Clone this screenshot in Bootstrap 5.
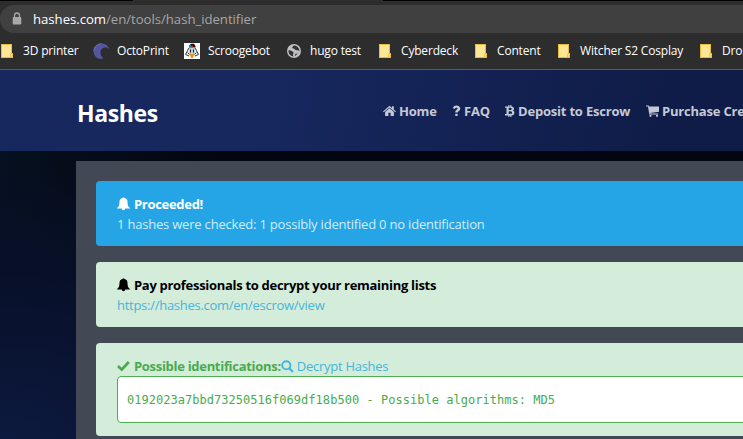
<!DOCTYPE html>
<html lang="en">
<head>
<meta charset="utf-8">
<title>Hashes - Hash identifier</title>
<link href="https://cdn.jsdelivr.net/npm/bootstrap@5.3.0/dist/css/bootstrap.min.css" rel="stylesheet">
<style>
body{width:743px;height:439px;font-family:"Open Sans","Noto Sans",sans-serif;font-size:13px;line-height:20px;letter-spacing:-.2px;background:#2d2d2d}
svg{display:block;flex:none}
.tabs-edge{height:1px;background:linear-gradient(90deg,#000 133px,#2d2d2d 133px,#2d2d2d 383px,#000 383px)}
.address{height:28px;margin-top:4px;padding-left:12px;border-radius:14px 0 0 14px;background:#404040;color:#a6a6a6;font-size:13.2px;letter-spacing:-.04px}
.address svg{margin-right:11px}
.address b{font-weight:400;color:#fff}
.bookmarks{height:37px;padding-left:1px;border-bottom:1px solid #5b5b5b;color:#fff;font-size:12px;letter-spacing:-.18px}
.bookmark{display:flex;align-items:center;flex:none;white-space:nowrap}
.bookmark svg{margin-right:10px}
.bookmark .fav{margin-right:7px}
.bookmark .fav-duck{margin-right:8px}
.bookmark .fav-globe{margin-right:9px}
.w-a{width:92px}.w-b{width:91px}.w-c{width:103px}.w-d{width:92px}.w-e{width:96px}.w-f{width:83px}.w-g{width:142px}
.site-header{height:81px;padding-left:77px;background:linear-gradient(100deg,#17285f 35%,#0f1c47 90%)}
.brand{width:306px;flex:none;padding-top:4px;font-size:23px;font-weight:700;color:#fff;letter-spacing:-.4px}
.menu{padding-top:1px;color:#c5c9d6;font-weight:700;font-size:13px;letter-spacing:-.2px;white-space:nowrap}
.menu svg{margin-right:3px}
.menu>div{display:flex;align-items:center;flex:none}
.m-a{width:69px}.m-b{width:53px}.m-c{width:141px}
.stage{height:288px;padding:10px 0 0 76px;background:radial-gradient(ellipse 420px 300px at 0 110%,#0d1b42 0,#081029 65%,transparent 100%),linear-gradient(90deg,#061020,#030610 30%)}
.sheet{height:278px;padding:20px 0 0 20px;background:#434954}
.notice{margin:0 -32px 16px 0;padding:13px 21px 0;height:65px;border:0;border-radius:4px}
.notice-blue{background:#25a5e5;color:#d0edfa}
.notice-green{background:#d4ecda;color:#000}
.notice-tall{height:93px}
.notice svg{margin-right:4px}
.notice a{color:#46b5d9;text-decoration:none}
.notice a svg{margin-right:3px}
.link-line{letter-spacing:-.27px}
.title{font-weight:700;letter-spacing:-.3px}
.green{color:#48ab4e}
.result{height:47px;padding-left:9px;background:#fff;border:1px solid #4caf50;border-radius:4px;color:#48ab4e;font:12px "DejaVu Sans Mono",monospace;letter-spacing:.03px}
</style>
</head>
<body class="overflow-hidden">
<svg width="0" height="0" class="position-absolute">
<defs>
<symbol id="folder" viewBox="0 0 12 14"><path fill="#e8bd3d" d="M0 0h11v9h1v5H0z"/><path fill="#ffe694" d="M1 1h9v8.500l-.8.500v3H1z"/><path fill="#ffe07b" d="M10 10h1v3h-1z"/></symbol>
<symbol id="bell" viewBox="0 0 13 14"><path fill="currentColor" d="M5.700 1V.4h1.600V1c2.300.3 3.200 2 3.200 4 0 3.600.9 4.800 2.400 5.900v.7H8.200c0 .9-.7 1.600-1.700 1.600s-1.700-.7-1.700-1.600H.1v-.7C1.600 9.800 2.500 8.600 2.500 5c0-2 .9-3.700 3.200-4z"/></symbol>
</defs></svg>
<div class="tabs-edge"></div>
<div class="address d-flex align-items-center">
<svg width="10" height="14" viewBox="0 0 10 14"><path d="M2.500 6V3.500a2.500 2.500 0 0 1 5 0V6" fill="none" stroke="#a8a8a8" stroke-width="1.300"/><rect x=".7" y="5" width="8.600" height="7.500" rx="1" fill="#a8a8a8"/></svg>
<span><b>hashes.com</b>/en/tools/hash_identifier</span>
</div>
<div class="bookmarks d-flex">
<div class="bookmark w-a"><svg width="12" height="14"><use href="#folder"/></svg><span>3D printer</span></div>
<div class="bookmark w-b"><svg class="fav" width="17" height="16" viewBox="0 0 17 16"><path d="M8 15.800C3.500 15.800.6 12.300.6 8.200.6 3.500 4 .4 8.500.4c4 0 7 2.300 7.700 5.700-1.500-1.700-3.300-2-4.900-1.500C8.600 5.400 7.200 7.500 7.500 10c.2 2.200 1.200 3.900 2.900 5.200-.6.400-1.500.6-2.400.6z" fill="#5556a0"/><path d="M1 8c0-4 3-7.200 7.500-7.200" fill="none" stroke="#6b6cb5"/></svg><span>OctoPrint</span></div>
<div class="bookmark w-c"><svg class="fav-duck" width="16" height="16" viewBox="0 0 16 16"><path fill="#fff" d="M0 0h16v16H0z"/><path fill="#171717" d="M5 3 7 .8h3l1.500 2.200v1.500H5z"/><path fill="#1687c9" d="M5 2h2v2H5z"/><path fill="#d53b35" d="M7 3h2v1.500H7z"/><path fill="#bcd3dc" d="M5.500 5h5l1 6-3.500 3-3.500-3z"/><path fill="none" stroke="#333" d="M5 5 1.500 11.500 5 13M11 5l3.500 6.500L11 13M3.500 9.500l2 2M12.500 9.500l-2 2"/><path fill="#222" d="M6 6.500h1v3H6zM9 6.500h1v3H9z"/><path fill="#ec9426" d="M5.500 11h5l-1 3L8 15.500 6.500 14z"/></svg><span>Scroogebot</span></div>
<div class="bookmark w-d"><svg class="fav-globe" width="14" height="14" viewBox="0 0 14 14"><circle cx="7" cy="7" r="7" fill="#bfc1c5"/><path d="M1.500 6.300c2-.5 3 .8 4.300 1.500 1 .6 1.300 1.400.4 2-.7.500-.4 1.500.4 2.600C3.500 12.300 1.200 9.700 1.500 6.300zM7.500 1.600c-1.600.3-2.600 1.300-2.100 2.400.4.800 1.500.5 2.300 1.300.7.900 1.600 1.200 3 1 .7 0 1.300.6 1.700 1.500.3-3-1.500-5.700-4.900-6.200zM8 10.700c.5-1 1.700-1 2.700-1.400-.6 1.200-1.600 2.200-2.900 2.600z" fill="#333"/></svg><span>hugo test</span></div>
<div class="bookmark w-e"><svg width="12" height="14"><use href="#folder"/></svg><span>Cyberdeck</span></div>
<div class="bookmark w-f"><svg width="12" height="14"><use href="#folder"/></svg><span>Content</span></div>
<div class="bookmark w-g"><svg width="12" height="14"><use href="#folder"/></svg><span>Witcher S2 Cosplay</span></div>
<div class="bookmark"><svg width="12" height="14"><use href="#folder"/></svg><span>Drones</span></div>
</div>
<header class="site-header d-flex align-items-center">
<div class="brand">Hashes</div>
<nav class="menu d-flex">
<div class="m-a"><svg width="13" height="12" viewBox="0 0 13 12"><path fill="currentColor" d="M6.500.8 9 3V1.300h1.800v3.300L13 6.500l-.7.800L6.500 2.400.7 7.300 0 6.500zM6.500 3.300l4.400 3.800v3.900H7.600V7.800H5.400V11H2.100V7.100z"/></svg><span>Home</span></div>
<div class="m-b"><svg width="9" height="12" viewBox="0 0 9 12"><path fill="currentColor" d="M.8 3C1.500 1.300 2.700.5 4.500.5 6.700.5 8.300 2 8.300 3.600c0 1.400-.8 2-1.600 2.600-.8.500-1 .8-1 1.300H3.300c0-1.500.4-2 1.300-2.700.7-.5 1-.8 1-1.200 0-.5-.4-.9-1.200-.9-.7 0-1.200.4-1.700 1.300zM3.300 8.700h2.300V11H3.300z"/></svg><span>FAQ</span></div>
<div class="m-c"><svg width="10" height="12" viewBox="0 0 10 12"><path fill="currentColor" fill-rule="evenodd" d="M0 1.400h3.300V0h1.100v1.400h.9V0h1.100v1.500C8.200 1.700 9 2.500 9 3.700c0 .9-.4 1.500-1.300 1.900 1.200.3 1.700 1.100 1.700 2.100 0 1.700-1.100 2.500-3 2.700V12H5.300v-1.600h-.9V12H3.300v-1.600H0V9h1.500V2.800H0zM3.700 2.800v2.100c1.900.1 3 0 3-1 0-1.100-1.100-1.200-3-1.100zm0 3.400V9c2.100.1 3.400 0 3.400-1.400S5.800 6.200 3.700 6.200z"/></svg><span>Deposit to Escrow</span></div>
<div><svg width="13" height="12" viewBox="0 0 13 12"><path fill="currentColor" d="M0 .5h2.700l.3 1h10v5.300L4.200 7.900l.2.700h7.700v1H3.300L2 1.500H0z"/><circle cx="4.500" cy="10.800" r="1.100" fill="currentColor"/><circle cx="11" cy="10.800" r="1.100" fill="currentColor"/></svg><span>Purchase Credits</span></div>
</nav>
</header>
<main class="stage">
<div class="sheet">
<div class="notice notice-blue">
<div class="d-flex align-items-center title text-white"><svg width="13" height="14"><use href="#bell"/></svg><span>Proceeded!</span></div>
<div>1 hashes were checked: 1 possibly identified 0 no identification</div>
</div>
<div class="notice notice-green">
<div class="d-flex align-items-center title"><svg width="13" height="14"><use href="#bell"/></svg><span>Pay professionals to decrypt your remaining lists</span></div>
<div class="link-line"><a href="#">https://hashes.com/en/escrow/view</a></div>
</div>
<div class="notice notice-green notice-tall">
<div class="d-flex align-items-center"><svg class="green" width="13" height="12" viewBox="0 0 13 12"><path d="m1 6 3.700 3.600L11.800 2" fill="none" stroke="currentColor" stroke-width="2.700"/></svg><span class="title green">Possible identifications:</span><a href="#" class="d-flex align-items-center link-line"><svg width="13" height="13" viewBox="0 0 13 13"><circle cx="5.300" cy="5.300" r="4.100" fill="none" stroke="currentColor" stroke-width="1.900"/><path d="m8.300 8.300 3.600 3.600" stroke="currentColor" stroke-width="2.200"/></svg><span>Decrypt Hashes</span></a></div>
<div class="result d-flex align-items-center"><span>0192023a7bbd73250516f069df18b500 - Possible algorithms: MD5</span></div>
</div>
</div>
</main>
<script src="https://cdn.jsdelivr.net/npm/bootstrap@5.3.0/dist/js/bootstrap.bundle.min.js"></script>
</body>
</html>
